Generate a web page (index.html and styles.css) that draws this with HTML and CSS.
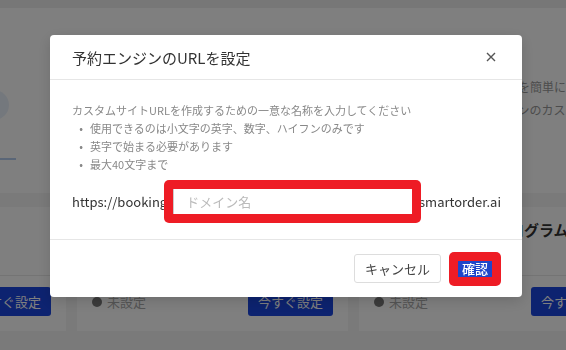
FILE: index.html
```html
<!DOCTYPE html>
<html lang="ja">
<head>
    <meta charset="UTF-8">
    <title>予約エンジンのURLを設定</title>
    <link rel="stylesheet" href="styles.css">
</head>
<body>
<div class="topbar"></div>
<div class="board">
    <div class="hero">
        <div>
            <svg class="art" width="271" height="185" viewBox="0 0 271 185">
                <circle cx="199" cy="97" r="15" fill="#e9f1fb"/>
                <line x1="150" y1="151" x2="221" y2="151" stroke="#b4cdef" stroke-width="2"/>
            </svg>
        </div>
        <div></div>
        <div class="intro">
            <h3>予約エンジン</h3>
            <p>
                <span>オンライン予約の受付管理を簡単に行えます。</span>
                <span>予約サイトのロゴやアイコンのカスタマイズが可能です。</span>
            </p>
        </div>
    </div>
    <div class="card feature">
        <div class="feature-head"><h3>LINE連携</h3></div>
        <div class="feature-foot">
            <span class="status">未設定</span>
            <button class="btn-go">今すぐ設定</button>
        </div>
    </div>
    <div class="card feature">
        <div class="feature-head"><h3>決済設定</h3></div>
        <div class="feature-foot">
            <span class="status">未設定</span>
            <button class="btn-go">今すぐ設定</button>
        </div>
    </div>
    <div class="card feature">
        <div class="feature-head"><h3>ポイント・会員証プログラム</h3></div>
        <div class="feature-foot">
            <span class="status">未設定</span>
            <button class="btn-go">今すぐ設定</button>
        </div>
    </div>
</div>

<div class="overlay">
    <div class="modal">
        <div class="modal-head">
            <h2>予約エンジンのURLを設定</h2>
            <button class="close" title="閉じる">
                <svg width="10" height="10" viewBox="0 0 10 10">
                    <path d="M1 1L9 9M9 1L1 9" stroke="#555" stroke-width="1.4" fill="none"/>
                </svg>
            </button>
        </div>
        <div class="modal-body">
            <div class="hint">
                <p>カスタムサイトURLを作成するための一意な名称を入力してください</p>
                <ul>
                    <li>使用できるのは小文字の英字、数字、ハイフンのみです</li>
                    <li>英字で始まる必要があります</li>
                    <li>最大40文字まで</li>
                </ul>
            </div>
            <div class="url-row">
                <span>https://booking</span>
                <div class="url-field">
                    <input type="text" placeholder="ドメイン名">
                </div>
                <span class="url-suffix">smartorder.ai</span>
            </div>
        </div>
        <div class="modal-foot">
            <button class="btn-cancel">キャンセル</button>
            <button class="btn-ok"><span>確認</span></button>
        </div>
    </div>
</div>
</body>
</html>
```

FILE: styles.css
```css
* {
  box-sizing: border-box;
}

body {
  margin: 0;
  width: 566px;
  height: 350px;
  overflow: hidden;
  background: #f4f4f4;
  font-family: "Noto Sans CJK JP", "Noto Sans", sans-serif;
  color: #333;
}

.topbar {
  height: 8px;
  background: #eee;
}

/* page is scrolled sideways, first column only shows its right edge */
.board {
  display: grid;
  grid-template-columns: 271px 271px 272px;
  grid-template-rows: 185px 124px;
  gap: 14px 11px;
  margin-left: -205px;
}

.hero {
  grid-column: 1 / -1;
  display: grid;
  grid-template-columns: 271px 271px 272px;
  gap: 11px;
  background: #fff;
  overflow: hidden;
}

.card {
  background: #fff;
  overflow: hidden;
}

.art {
  display: block;
}

.board h3 {
  margin: 0;
  font-size: 15px;
  line-height: 18px;
  font-weight: 700;
  color: #333;
  white-space: nowrap;
}

.intro {
  padding: 39px 15px 0;
}
.intro p {
  margin: 10px 0 0;
  font-size: 12px;
  line-height: 23px;
  color: #999;
  white-space: nowrap;
}
.intro p span {
  display: block;
}

.feature {
  display: flex;
  flex-direction: column;
}
.feature-head {
  height: 68px;
  padding: 14px 15px 0;
}
.feature-foot {
  flex: 1;
  display: flex;
  align-items: center;
  justify-content: space-between;
  padding: 11px 15px 15px;
  border-top: 1px solid #e8e8e8;
}

.status {
  display: flex;
  align-items: center;
  gap: 5px;
  font-size: 13px;
  color: #aaa;
}
.status::before {
  content: "";
  width: 10px;
  height: 10px;
  border-radius: 50%;
  background: #777;
}

.btn-go {
  flex-shrink: 0;
  height: 29px;
  padding: 0 10px;
  border: 0;
  border-radius: 3px;
  background: #1a46e0;
  color: #fff;
  font-family: inherit;
  font-size: 13px;
}

.overlay {
  position: fixed;
  inset: 0;
  background: rgba(0, 0, 0, 0.5);
  padding: 35px 0 0 50px;
}

.modal {
  width: 472px;
  background: #fff;
  border-radius: 4px;
  box-shadow: 0 4px 14px rgba(0, 0, 0, 0.15);
}

.modal-head {
  height: 45px;
  display: flex;
  align-items: center;
  justify-content: space-between;
  padding: 0 21px 0 22px;
  border-bottom: 1px solid #e6e6e6;
}
.modal-head h2 {
  margin: 0;
  font-size: 15px;
  font-weight: 400;
  color: #333;
}

.close {
  width: 20px;
  height: 20px;
  padding: 0;
  border: 0;
  background: none;
  display: flex;
  align-items: center;
  justify-content: center;
}

.modal-body {
  padding: 21px 21px 16px 22px;
}

.hint {
  font-size: 11px;
  line-height: 18px;
  color: #888;
}
.hint p {
  margin: 0;
}
.hint ul {
  margin: 0;
  padding: 0;
  list-style: none;
}
.hint li::before {
  content: "•";
  display: inline-block;
  width: 18px;
  text-align: center;
}

.url-row {
  display: flex;
  align-items: center;
  margin-top: 7px;
  font-size: 13px;
  color: #333;
}

/* red highlight frame lies a little over the surrounding text */
.url-field {
  flex: 1;
  display: flex;
  margin: 0 -2px 0 -3px;
  padding: 9px;
  background: #ee1c25;
  border-radius: 5px;
  position: relative;
}
.url-field input {
  flex: 1;
  min-width: 0;
  height: 25px;
  padding: 0 12px;
  border: 0;
  border-left: 1px solid #ccc;
  border-radius: 0;
  outline: none;
  font-family: inherit;
  font-size: 13px;
  color: #333;
}
.url-field input::placeholder {
  color: #bbb;
}

.modal-foot {
  height: 58px;
  display: flex;
  align-items: center;
  justify-content: flex-end;
  gap: 8px;
  padding: 0 21px;
  border-top: 1px solid #e6e6e6;
}

.btn-cancel {
  height: 29px;
  padding: 0 10px;
  border: 1px solid #ddd;
  border-radius: 3px;
  background: #fff;
  color: #444;
  font-family: inherit;
  font-size: 13px;
}

.btn-ok {
  padding: 9px;
  border: 0;
  border-radius: 5px;
  background: #ee1c25;
  font-family: inherit;
  font-size: 13px;
  font-weight: 500;
  color: #fff;
}
.btn-ok span {
  display: block;
  padding: 0 4px;
  line-height: 16px;
  background: #1f45c9;
}
```
